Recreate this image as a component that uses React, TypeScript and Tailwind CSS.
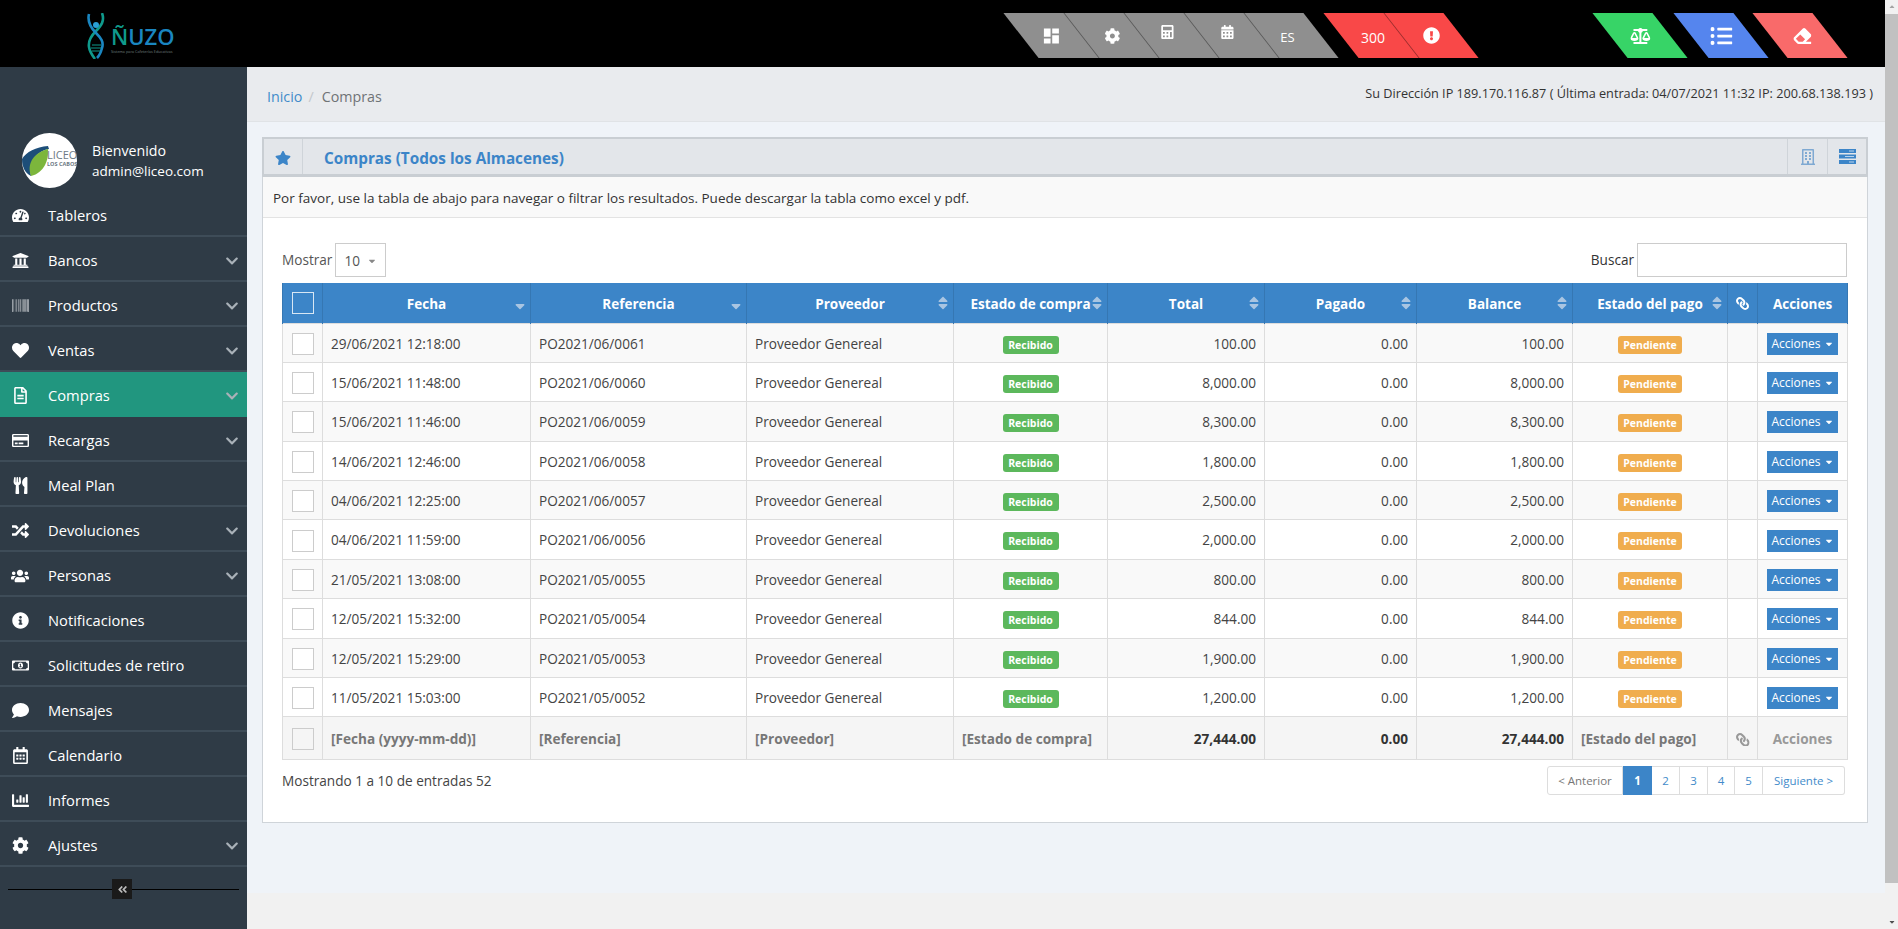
import type { ReactNode } from "react";
import {
  FaAngleDoubleLeft,
  FaBalanceScale,
  FaBarcode,
  FaCalculator,
  FaCalendarAlt,
  FaCaretDown,
  FaChartBar,
  FaChevronDown,
  FaCog,
  FaComment,
  FaEraser,
  FaExclamationCircle,
  FaHeart,
  FaInfoCircle,
  FaLink,
  FaListUl,
  FaRandom,
  FaRegBuilding,
  FaRegCalendarAlt,
  FaRegCreditCard,
  FaRegFileAlt,
  FaRegMoneyBillAlt,
  FaSort,
  FaSortDown,
  FaStar,
  FaTachometerAlt,
  FaUniversity,
  FaUsers,
  FaUtensils,
} from "react-icons/fa";
import { MdDashboard } from "react-icons/md";

const menu = [
  { label: "Tableros", icon: <FaTachometerAlt />, arrow: false },
  { label: "Bancos", icon: <FaUniversity />, arrow: true },
  { label: "Productos", icon: <FaBarcode className="text-[#c4c9cd]" />, arrow: true },
  { label: "Ventas", icon: <FaHeart />, arrow: true },
  { label: "Compras", icon: <FaRegFileAlt />, arrow: true, active: true },
  { label: "Recargas", icon: <FaRegCreditCard />, arrow: true },
  { label: "Meal Plan", icon: <FaUtensils />, arrow: false },
  { label: "Devoluciones", icon: <FaRandom />, arrow: true },
  { label: "Personas", icon: <FaUsers className="text-[18px]" />, arrow: true },
  { label: "Notificaciones", icon: <FaInfoCircle />, arrow: false },
  { label: "Solicitudes de retiro", icon: <FaRegMoneyBillAlt />, arrow: false },
  { label: "Mensajes", icon: <FaComment />, arrow: false },
  { label: "Calendario", icon: <FaRegCalendarAlt />, arrow: false },
  { label: "Informes", icon: <FaChartBar />, arrow: false },
  { label: "Ajustes", icon: <FaCog />, arrow: true },
];

const rows = [
  ["29/06/2021 12:18:00", "PO2021/06/0061", "100.00"],
  ["15/06/2021 11:48:00", "PO2021/06/0060", "8,000.00"],
  ["15/06/2021 11:46:00", "PO2021/06/0059", "8,300.00"],
  ["14/06/2021 12:46:00", "PO2021/06/0058", "1,800.00"],
  ["04/06/2021 12:25:00", "PO2021/06/0057", "2,500.00"],
  ["04/06/2021 11:59:00", "PO2021/06/0056", "2,000.00"],
  ["21/05/2021 13:08:00", "PO2021/05/0055", "800.00"],
  ["12/05/2021 15:32:00", "PO2021/05/0054", "844.00"],
  ["12/05/2021 15:29:00", "PO2021/05/0053", "1,900.00"],
  ["11/05/2021 15:03:00", "PO2021/05/0052", "1,200.00"],
];

const colWidths = [40, 208, 216, 207, 154, 157, 152, 156, 155, 30, 90];

function NavCell({ children, first }: { children: ReactNode; first?: boolean }) {
  return (
    <div className={`flex h-full w-[60px] items-center justify-center ${first ? "" : "border-l border-black/40"}`}>
      <span className="flex skew-x-[-38deg] items-center justify-center text-white">{children}</span>
    </div>
  );
}

function Logo() {
  return (
    <div className="ml-[87px] flex h-full w-[160px] items-center gap-[6px]">
      <svg width="18" height="46" viewBox="0 0 18 46" fill="none">
        <path d="M15 0c3 8 -1 13 -6 18c-5 5 -8 10 -7 16c.5 4 3 8 6 12" stroke="#0f9a8c" strokeWidth="2.6" />
        <path d="M2 1c-2 8 2 14 7 19c5 5 8 9 6 15c-1 4 -3 8 -5 10" stroke="#1a86c0" strokeWidth="2.6" />
        <circle cx="9" cy="12" r="3" fill="#2a9fd6" />
        <path d="M5 32h9M4 35h10M5 38h8" stroke="#0f9a8c" strokeWidth="1.2" />
      </svg>
      <div className="mt-[8px] flex flex-col">
        <div className="h-[22px] text-[22px] leading-[22px] font-semibold">
          <span className="text-[#0f9a8c]">Ñ</span>
          <span className="text-[#1a86c0]">UZO</span>
        </div>
        <span className="mt-[2px] h-[5px] text-[3.8px] leading-[5px] whitespace-nowrap text-[#6f7f7f]">Sistema para Cafeterías Educativas</span>
      </div>
    </div>
  );
}

function Avatar() {
  return (
    <svg width="55" height="55" viewBox="0 0 55 55" className="shrink-0">
      <circle cx="27.5" cy="27.5" r="27.5" fill="#fff" />
      <path d="M0 26c4 -7 14 -12 26 -13l1 3c-12 2 -20 12 -18 27c-6 -3 -9 -9 -9 -17z" fill="#1d4e79" />
      <path d="M9 43c-5 -13 4 -24 17 -27c1 11 -4 24 -17 27z" fill="#7cb63c" />
      <text x="25" y="26" fontSize="11" fill="#6e7a85" fontFamily="Open Sans, sans-serif">LICEO</text>
      <text x="25" y="33" fontSize="5.5" fontWeight="700" fill="#6e7a85" fontFamily="Open Sans, sans-serif">LOS CABOS</text>
    </svg>
  );
}

function Sidebar() {
  return (
    <aside className="flex w-[247px] shrink-0 flex-col bg-[#2f3b46] text-[14.7px] text-white">
      <div className="flex h-[125px] items-end gap-[15px] pb-[4px] pl-[22px]">
        <Avatar />
        <div className="pb-[7px] leading-[20px]">
          <div className="text-[14.2px]">Bienvenido</div>
          <div className="text-[13.5px]">admin@liceo.com</div>
        </div>
      </div>
      <nav>
        {menu.map((item) => (
          <div
            key={item.label}
            className={`flex h-[45px] items-center border-b-2 pt-[4px] ${
              item.active ? "border-[#21967f] bg-[#21967f]" : "border-[#3e4c58]"
            }`}>
            <span className="flex w-[40px] justify-center text-[17px]">{item.icon}</span>
            <span className="ml-[8px]">{item.label}</span>
            {item.arrow && <FaChevronDown className="mr-[8px] ml-auto text-[14px] text-[#a9b1b8]" />}
          </div>
        ))}
      </nav>
      <div className="relative mx-[8px] mt-[22px] h-px bg-black">
        <button className="absolute top-[-10px] left-[104px] flex h-5 w-5 items-center justify-center bg-[#1a1a1a] text-[11px] text-[#bbb]">
          <FaAngleDoubleLeft />
        </button>
      </div>
    </aside>
  );
}

function SortIcon({ down }: { down?: boolean }) {
  return (
    <span className="absolute top-1/2 right-[2px] -translate-y-1/2 text-[16px] text-[#a9c5e2]">
      {down ? <FaSortDown /> : <FaSort />}
    </span>
  );
}

function Th({ children, sort, down }: { children: ReactNode; sort?: boolean; down?: boolean }) {
  return (
    <th className="relative border-x border-[#3577b3] px-2 pt-[2px] text-center text-[13.5px] font-bold text-white">
      {children}
      {sort && <SortIcon down={down} />}
    </th>
  );
}

function TasksIcon() {
  return (
    <svg width="17" height="15" viewBox="0 0 17 15">
      <rect width="17" height="4" y="0" fill="#3c85c8" />
      <rect width="17" height="4" y="5.5" fill="#3c85c8" />
      <rect width="17" height="4" y="11" fill="#3c85c8" />
      <path d="M10 2h5M6 7.5h9M10 13h5" stroke="#b9d3ec" strokeWidth="1" />
    </svg>
  );
}

function Table() {
  const td = "border border-[#dddddd] px-2 pt-[2px]";
  return (
    <table className="w-[1565px] table-fixed border-collapse text-[13.6px] text-[#444]">
      <colgroup>
        {colWidths.map((w, i) => (
          <col key={i} style={{ width: w }} />
        ))}
      </colgroup>
      <thead>
        <tr className="h-[40px] bg-[#3c85c8]">
          <th className="border-x border-[#3577b3]">
            <div className="mx-auto h-[22px] w-[22px] border border-white/80" />
          </th>
          <Th sort down>Fecha</Th>
          <Th sort down>Referencia</Th>
          <Th sort>Proveedor</Th>
          <Th sort>Estado de compra</Th>
          <Th sort>Total</Th>
          <Th sort>Pagado</Th>
          <Th sort>Balance</Th>
          <Th sort>Estado del pago</Th>
          <Th><FaLink className="mx-auto -scale-x-100 text-[13px]" /></Th>
          <Th>Acciones</Th>
        </tr>
      </thead>
      <tbody>
        {rows.map(([date, ref, total], i) => (
          <tr key={ref} className={`h-[39.4px] ${i % 2 === 0 ? "bg-[#f9f9f9]" : "bg-white"}`}>
            <td className={td}>
              <div className="mx-auto h-[22px] w-[22px] border border-[#cccccc] bg-white" />
            </td>
            <td className={td}>{date}</td>
            <td className={td}>{ref}</td>
            <td className={td}>Proveedor Genereal</td>
            <td className={`${td} text-center`}>
              <span className="inline-block h-[18px] w-[56px] rounded-[3px] bg-[#5cb85c] text-[10.5px] leading-[18px] font-bold text-white">Recibido</span>
            </td>
            <td className={`${td} text-right`}>{total}</td>
            <td className={`${td} text-right`}>0.00</td>
            <td className={`${td} text-right`}>{total}</td>
            <td className={`${td} text-center`}>
              <span className="inline-block h-[18px] w-[64px] rounded-[3px] bg-[#f0ad4e] text-[10.5px] leading-[18px] font-bold text-white">Pendiente</span>
            </td>
            <td className={td} />
            <td className={`${td} text-center`}>
              <button className="inline-flex h-[22px] w-[71px] items-center justify-center gap-[3px] bg-[#3c85c8] text-[12px] text-white">
                Acciones <FaCaretDown className="text-[10px]" />
              </button>
            </td>
          </tr>
        ))}
      </tbody>
      <tfoot>
        <tr className="h-[43px] bg-[#f5f5f5] font-bold text-[#777]">
          <td className={td}>
            <div className="mx-auto h-[22px] w-[22px] border border-[#cccccc]" />
          </td>
          <td className={td}>[Fecha (yyyy-mm-dd)]</td>
          <td className={td}>[Referencia]</td>
          <td className={td}>[Proveedor]</td>
          <td className={`${td} whitespace-nowrap`}>[Estado de compra]</td>
          <td className={`${td} text-right text-[#333]`}>27,444.00</td>
          <td className={`${td} text-right text-[#333]`}>0.00</td>
          <td className={`${td} text-right text-[#333]`}>27,444.00</td>
          <td className={`${td} whitespace-nowrap`}>[Estado del pago]</td>
          <td className={`${td} text-center`}><FaLink className="mx-auto -scale-x-100 text-[#999]" /></td>
          <td className={`${td} text-center text-[#999]`}>Acciones</td>
        </tr>
      </tfoot>
    </table>
  );
}

function Pagination() {
  const cell = "flex h-[29px] items-center justify-center border border-l-0 border-[#dddddd] text-[11.5px] text-[#428bca]";
  return (
    <div className="flex">
      <span className="flex h-[29px] w-[76px] items-center justify-center rounded-l-[3px] border border-[#dddddd] text-[11.5px] text-[#777]">&lt; Anterior</span>
      <span className="flex h-[29px] w-[29px] items-center justify-center bg-[#3c85c8] text-[11.5px] font-bold text-white">1</span>
      <span className={`${cell} w-[28px]`}>2</span>
      <span className={`${cell} w-[28px]`}>3</span>
      <span className={`${cell} w-[27px]`}>4</span>
      <span className={`${cell} w-[28px]`}>5</span>
      <span className={`${cell} w-[82px] rounded-r-[3px]`}>Siguiente &gt;</span>
    </div>
  );
}

function Panel() {
  return (
    <section className="mt-[15px] mr-[17px] ml-[15px] h-[686px] border border-[#cfd4d9] bg-white">
      <div className="-mx-px -mt-px flex h-[40px] border-2 border-b-[3px] border-[#c9ced3] bg-[#e3e6ea]">
        <div className="flex w-[39px] items-center justify-center border-r border-[#cfd4d9] pt-[3px] text-[16px] text-[#3c85c8]">
          <FaStar />
        </div>
        <h2 className="ml-[21px] flex items-center pt-[4px] text-[15.3px] font-bold text-[#3c85c8]">Compras (Todos los Almacenes)</h2>
        <div className="ml-auto flex w-[40px] items-center justify-center border-l border-[#cfd4d9] text-[16px] text-[#7fa9d2]">
          <FaRegBuilding />
        </div>
        <div className="flex w-[39px] items-center justify-center border-l border-[#cfd4d9]">
          <TasksIcon />
        </div>
      </div>
      <p className="flex h-[41px] items-center border-b border-[#e3e3e3] bg-[#f9f9f9] pt-[3px] pl-[10px] text-[13.5px] text-[#333]">
        Por favor, use la tabla de abajo para navegar o filtrar los resultados. Puede descargar la tabla como excel y pdf.
      </p>
      <div className="pr-[20px] pl-[19px]">
        <div className="flex h-[65px] items-end pb-[6px]">
          <div className="flex h-[34px] items-center">
            <span className="text-[13.6px] text-[#555]">Mostrar</span>
            <div className="ml-[3px] flex h-[34px] w-[51px] items-center justify-between border border-[#cccccc] px-[8px] pt-[2px] text-[13.6px] text-[#555]">
              10 <FaCaretDown className="text-[10px] text-[#888]" />
            </div>
          </div>
          <div className="ml-auto flex h-[34px] items-center">
            <span className="text-[13.6px] text-[#333]">Buscar</span>
            <div className="ml-[3px] h-[34px] w-[210px] border border-[#cccccc]" />
          </div>
        </div>
        <Table />
        <div className="mt-[6px] flex items-center justify-between pr-[2px]">
          <span className="text-[13.6px] text-[#444]">Mostrando 1 a 10 de entradas 52</span>
          <Pagination />
        </div>
      </div>
    </section>
  );
}

export default function App() {
  return (
    <div className="flex h-[929px] overflow-hidden bg-[#eff3f8] font-['Open_Sans',sans-serif]">
      <div className="flex min-w-0 flex-1 flex-col">
        <header className="flex h-[67px] shrink-0 items-center bg-black pt-[4px]">
          <Logo />
          <div className="ml-[773.5px] flex h-[45px] w-[300px] skew-x-[38deg] bg-[#8f8f8f] text-[15px]">
            <NavCell first><MdDashboard className="text-[20px]" /></NavCell>
            <NavCell><FaCog className="text-[16px]" /></NavCell>
            <NavCell><FaCalculator className="-translate-x-[5px] -translate-y-[4px] text-[14px]" /></NavCell>
            <NavCell><FaCalendarAlt className="-translate-x-[5px] -translate-y-[4px] text-[14px]" /></NavCell>
            <NavCell><span className="-translate-x-[4px] translate-y-[2px] text-[13px]">ES</span></NavCell>
          </div>
          <div className="ml-[20px] flex h-[45px] w-[120px] skew-x-[38deg] bg-[#f94848] text-[17px]">
            <NavCell first><span className="translate-x-[2px] translate-y-[2px] text-[14px]">300</span></NavCell>
            <NavCell><FaExclamationCircle /></NavCell>
          </div>
          <div className="ml-[149px] flex h-[45px] w-[60px] skew-x-[38deg] bg-[#37d467] text-[20px]">
            <NavCell first><FaBalanceScale /></NavCell>
          </div>
          <div className="ml-[21px] flex h-[45px] w-[60px] skew-x-[38deg] bg-[#5585ee] text-[22px]">
            <NavCell first><FaListUl /></NavCell>
          </div>
          <div className="ml-[19px] flex h-[45px] w-[60px] skew-x-[38deg] bg-[#f96a6a] text-[18px]">
            <NavCell first><FaEraser className="translate-x-[2px]" /></NavCell>
          </div>
        </header>
        <div className="flex min-h-0 flex-1">
          <Sidebar />
          <main className="flex min-w-0 flex-1 flex-col">
            <div className="flex h-[55px] shrink-0 items-center justify-between border-b border-[#e0e3e6] bg-[#e9ebee] pr-[12px] pl-[20px]">
              <div className="flex items-center pt-[6px] text-[14.3px]">
                <span className="text-[#428bca]">Inicio</span>
                <span className="mx-[6px] text-[#c4c8cc]">/</span>
                <span className="ml-[2px] text-[#6f7376]">Compras</span>
              </div>
              <span className="text-[12.7px] text-[#333]">Su Dirección IP 189.170.116.87 ( Última entrada: 04/07/2021 11:32 IP: 200.68.138.193 )</span>
            </div>
            <div className="flex-1">
              <Panel />
            </div>
            <div className="h-[36px] shrink-0 bg-[#f1f1f1]" />
          </main>
        </div>
      </div>
      <div className="flex w-[13px] shrink-0 flex-col bg-[#f1f1f1]">
        <div className="flex h-[14px] items-center justify-center text-[8px] text-[#a3a3a3]"><FaCaretDown className="rotate-180" /></div>
        <div className="h-[869px] bg-[#c1c1c1]" />
        <div className="mt-auto flex h-[14px] items-center justify-center text-[8px] text-[#505050]"><FaCaretDown /></div>
      </div>
    </div>
  );
}
